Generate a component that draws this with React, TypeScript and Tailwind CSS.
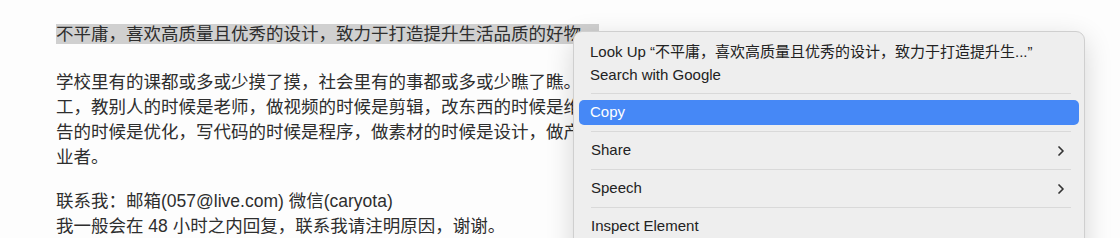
import { ChevronRight } from 'lucide-react'

const body = "font-['Liberation_Sans','Noto_Sans_CJK_SC',sans-serif]"

function Separator() {
  return <div className="ml-[17px] mr-[13px] h-px bg-[#d9d9d9]" />
}

function MenuItem({ label, submenu = false }: { label: string; submenu?: boolean }) {
  return (
    <div className="flex h-[37px] items-center justify-between pl-[17px] pr-[15px]">
      <span>{label}</span>
      {submenu && <ChevronRight size={16} strokeWidth={2.6} className="text-[#333]" />}
    </div>
  )
}

function ContextMenu() {
  return (
    <div className="absolute left-[573px] top-[31px] w-[512px] h-[240px] rounded-[9px] border border-[#cfcfcf] bg-[#eeeeee] pt-[9px] text-[15px] text-[#222] shadow-[0_8px_28px_rgba(0,0,0,0.16)] font-['Liberation_Sans','Noto_Sans_CJK_SC',sans-serif]">
      <div className="flex h-[23px] items-center pl-[16px]">
        Look Up “不平庸，喜欢高质量且优秀的设计，致力于打造提升生...”
      </div>
      <div className="flex h-[23px] items-center pl-[16px]">Search with Google</div>
      <div className="py-[6px]">
        <Separator />
      </div>
      <div className="mx-[5px] flex h-[25px] items-center rounded-[5px] bg-[#4688f6] pl-[11px] text-white">
        Copy
      </div>
      <div className="pt-[6px]">
        <Separator />
      </div>
      <MenuItem label="Share" submenu />
      <Separator />
      <MenuItem label="Speech" submenu />
      <Separator />
      <MenuItem label="Inspect Element" />
    </div>
  )
}

export default function App() {
  return (
    <div className="relative h-[238px] w-[1120px] overflow-hidden bg-[#fdfdfd]">
      <div className={`pl-[56px] pt-[22px] text-[17.5px] leading-[25px] text-[#2e2e2e] ${body}`}>
        <p>
          <span className="bg-[#d0d0d0]">不平庸，喜欢高质量且优秀的设计，致力于打造提升生活品质的好物。</span>
        </p>
        <div className="mt-[23px] whitespace-nowrap">
          <p>学校里有的课都或多或少摸了摸，社会里有的事都或多或少瞧了瞧。现在是个打</p>
          <p>工，教别人的时候是老师，做视频的时候是剪辑，改东西的时候是维修，做广</p>
          <p>告的时候是优化，写代码的时候是程序，做素材的时候是设计，做产品的时候是从</p>
          <p>业者。</p>
        </div>
        <div className="mt-[19px] whitespace-nowrap">
          <p>联系我：邮箱(057@live.com) 微信(caryota)</p>
          <p>我一般会在 48 小时之内回复，联系我请注明原因，谢谢。</p>
        </div>
      </div>
      <ContextMenu />
    </div>
  )
}
